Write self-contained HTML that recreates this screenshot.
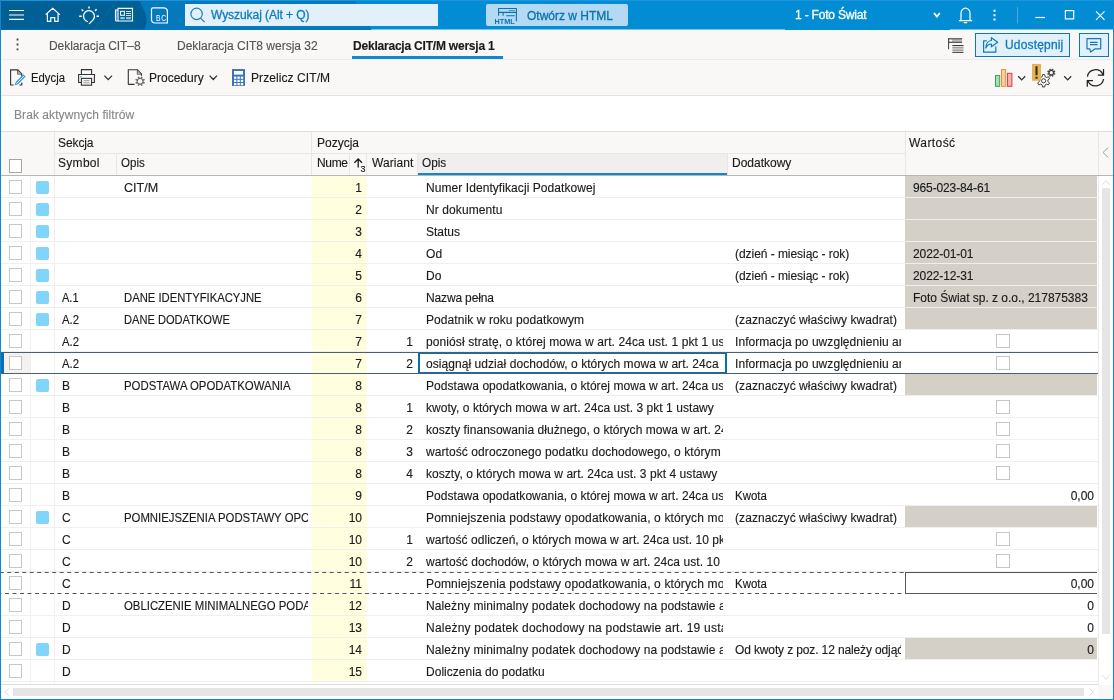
<!DOCTYPE html>
<html lang="pl"><head>
<meta charset="utf-8">
<title>Deklaracja CIT/M wersja 1</title>
<style>
*{box-sizing:border-box;margin:0;padding:0}
html,body{width:1114px;height:700px;overflow:hidden;background:#fff}
body{will-change:transform;-webkit-text-stroke:.14px;font-family:"Liberation Sans",sans-serif;font-size:12px;color:#1b1b1b;position:relative}
svg{position:absolute;overflow:visible}
/* window frame */
#frame{position:absolute;left:0;top:0;width:1114px;height:700px;border:1px solid #0f88d1;border-top:0;pointer-events:none;z-index:50}
/* title bar */
#tb{position:absolute;left:0;top:0;width:1114px;height:30px;background:#028cd4;border-bottom:1px solid #7cc3e9}
#tbdd{position:absolute;left:785px;top:28px;width:165px;height:2px;background:#028cd4}
#tbtop{position:absolute;left:0;top:0;width:1114px;height:1px;background:#1c93da}
#search{position:absolute;left:185px;top:4px;width:253px;height:22px;background:#e2f0fa;color:#0e7cc0;font-size:12px;line-height:22px;padding-left:26px}
#htmlbtn{position:absolute;left:486px;top:4px;width:142px;height:22px;background:#b4daf3;border-radius:2px;color:#0b72b2;font-size:12px;line-height:24px;padding-left:41px}
#comp{position:absolute;left:795px;top:0;height:30px;line-height:30px;color:#fff;font-size:12px}
/* tab row */
#tabs{position:absolute;left:1px;top:30px;width:1112px;height:30px;background:#f9f8f7;border-bottom:1px solid #ecebea}
.tab{position:absolute;top:0;height:30px;line-height:33px;font-size:12px;color:#555;white-space:nowrap}
.tab.act{color:#1b1b1b;font-weight:bold}
#tabul{position:absolute;left:351px;top:26px;width:151px;height:3px;background:#0f88d1}
#share{position:absolute;left:974px;top:3px;width:95px;height:24px;border:1px solid #0b78ba;background:#e2f0fa;color:#0e7cc0;font-size:12px;line-height:23px;padding-left:29px}
#chat{position:absolute;left:1078px;top:3px;width:30px;height:24px;border:1px solid #0b78ba;background:#e2f0fa}
/* toolbar */
#tools{position:absolute;left:1px;top:60px;width:1112px;height:36px;background:#f9f8f7;border-bottom:1px solid #e4e2e0}
.tl{position:absolute;top:0;height:35px;line-height:37px;font-size:12px;color:#1b1b1b;white-space:nowrap}
/* filter row */
#filter{position:absolute;left:1px;top:96px;width:1112px;height:36px;background:#fff;border-bottom:1px solid #e1dfdd;color:#8a8886;font-size:12px;line-height:38px;padding-left:13px}
/* grid header */
#gh{position:absolute;left:1px;top:132px;width:1112px;height:44px;background:#f9f8f7;border-bottom:1px solid #b8b6b4}
.hl{position:absolute;background:#e9e7e5}
.ht{position:absolute;z-index:2;font-size:12px;color:#1b1b1b;white-space:nowrap;line-height:14px}
/* rows */
.row{position:absolute;left:1px;width:1097px;height:22px;border-bottom:1px solid #f0efee;background:#fff;line-height:24px;white-space:nowrap}
.row .c{position:absolute;top:0;height:21px;overflow:hidden;font-size:12px}
.cb{position:absolute;left:8px;top:4px;width:13px;height:14px;border:1px solid #c8c6c4;background:#fff}
.ind{position:absolute;left:35px;top:5px;width:13px;height:13px;background:#81d4fa;border-radius:2px}
.sx{display:inline-block;transform-origin:0 50%;white-space:nowrap}
.sym{left:61px;width:55px}
.op{left:123px;width:184px}
.num{left:311px;width:55px;background:#ffffe0;text-align:right;padding-right:5px}
.var{left:367px;width:50px;text-align:right;padding-right:5px}
.op2{left:425px;width:297px}
.dod{left:734px;width:166px}
.val{left:904px;width:192px;padding-left:8px}
.val.g{background:#d4d0c8}
.val.r{text-align:right;padding-right:3px}
.vcb{position:absolute;left:91px;top:4px;width:14px;height:14px;border:1px solid #c8c6c4;background:#fff}

.row.sel:before{content:"";position:absolute;left:0;top:0;width:3px;height:22px;background:#0a6fb0}
.row.sel:after{content:"";position:absolute;left:3px;top:1px;width:26px;height:20px;background:#f3f2f1}
.row.sel .cb{z-index:1}
.row.sel .op2{left:417px;width:309px;height:20px;top:1px;border:1px solid #0a6fb0;border-width:1px 2px;padding-left:6px;line-height:20px}
.row.sel .op2:after{content:"";position:absolute;right:0;top:0;width:3px;height:18px;background:#fff}
.sl{position:absolute;left:1px;width:1097px;height:1px;background:#4a5f70;z-index:6}
.row.dash{border-bottom:0}
.val.bx{border:1px solid #555;border-right:0;height:22px;line-height:22px;z-index:5}
.dl{position:absolute;left:1px;width:904px;height:1px;z-index:4}
.vl{position:absolute;top:176px;width:1px;height:508px;background:#f0efee;z-index:3}

#gbot{position:absolute;left:1px;top:684px;width:1097px;height:1px;background:#e1dfdd}
#vsb{position:absolute;left:1098px;top:176px;width:15px;height:509px;background:#fff;border-left:1px solid #edebe9}
#vth{position:absolute;left:3px;top:12px;width:8px;height:446px;background:#e5e5e5}
#hsb{position:absolute;left:1px;top:685px;width:1112px;height:14px;background:#fff}
#hth{position:absolute;left:12px;top:3px;width:1071px;height:8px;background:#e5e5e5}
#search,#htmlbtn,#comp,#share{-webkit-text-stroke:.3px}
</style>
</head>
<body>
<div id="tb">
<svg style="left:0;top:0" width="1114" height="30" viewBox="0 0 1114 30" fill="none">
<path d="M0 1 H355.3 L371.5 30 H0 Z" fill="#0479bc"></path>
<path d="M0 1 H139.5 C143 8 146.6 14 146.6 20 C146.6 24 145.6 27 144.4 29.5 H0 Z" fill="#005f95"></path>
<path d="M94 30 L117 1" stroke="#5aa0c8" stroke-width="0.8" opacity=".2"></path>
</svg>
  <div id="tbtop"></div>
  <div id="tbdd"></div>
  <div id="search"><span style="letter-spacing: -0.06px;">Wyszukaj (Alt + Q)</span></div>
  <div id="htmlbtn"><span style="letter-spacing: 0px;">Otwórz w HTML</span></div>
  <div id="comp" style="letter-spacing: -0.19px;">1 - Foto Świat</div>
</div>
<div id="tabs">
  <div class="tab" style="left: 48px; letter-spacing: -0.07px;">Deklaracja CIT–8</div>
  <div class="tab" style="left: 176px; letter-spacing: 0px;">Deklaracja CIT8 wersja 32</div>
  <div class="tab act" style="left: 352px; letter-spacing: -0.21px;">Deklaracja CIT/M wersja 1</div>
  <div id="tabul"></div>
  <div id="share"><span style="letter-spacing: 0.17px;">Udostępnij</span></div>
  <div id="chat"></div>
</div>
<div id="tools">
  <div class="tl sx" style="left: 30px; transform: scaleX(0.943);">Edycja</div>
  <div class="tl" style="left: 148px; letter-spacing: 0px;">Procedury</div>
  <div class="tl" style="left: 250px; letter-spacing: 0.08px;">Przelicz CIT/M</div>
</div>
<div id="filter"><span style="letter-spacing: 0.07px;">Brak aktywnych filtrów</span></div>
<div id="gh">
  <div class="hl" style="left:53px;top:0;width:1px;height:43px"></div>
  <div class="hl" style="left:53px;top:21px;width:851px;height:1px"></div>
  <div class="hl" style="left:115px;top:22px;width:1px;height:21px"></div>
  <div class="hl" style="left:310px;top:0;width:1px;height:43px"></div>
  <div class="hl" style="left:365px;top:22px;width:1px;height:21px"></div>
  <div class="hl" style="left:416px;top:22px;width:1px;height:21px"></div>
  <div class="hl" style="left:726px;top:22px;width:1px;height:21px"></div>
  <div class="hl" style="left:904px;top:0;width:1px;height:43px"></div>
  <div class="hl" style="left:1097px;top:0;width:1px;height:43px"></div>
  <div class="ht" style="left: 57px; top: 4px; letter-spacing: -0.1px;">Sekcja</div>
  <div class="ht" style="left: 316px; top: 4px; letter-spacing: 0px;">Pozycja</div>
  <div class="ht" style="left: 908px; top: 4px; letter-spacing: 0.42px;">Wartość</div>
  <div class="ht" style="left: 57px; top: 24px; letter-spacing: 0.3px;">Symbol</div>
  <div class="ht sx" style="left: 120px; top: 24px; transform: scaleX(0.961);">Opis</div>
  <div class="ht" style="left: 316px; top: 24px; letter-spacing: -0.33px;">Nume</div>
  <div class="ht" style="left: 371px; top: 24px; letter-spacing: 0.08px;">Wariant</div>
  <div class="ht sx" style="left: 421px; top: 24px; transform: scaleX(0.982);">Opis</div>
  <div class="ht" style="left: 731px; top: 24px; letter-spacing: 0px;">Dodatkowy</div>
  <div class="hl" style="left:348px;top:22px;width:1px;height:21px"></div>
  <div style="position:absolute;left:417px;top:22px;width:309px;height:21px;background:#f0efee;border-bottom:2px solid #0f88d1"></div>
  <svg style="left:352px;top:26px" width="14" height="16" viewBox="0 0 14 16"><path d="M5.2 9.6 V1.2 M1.4 4.8 L5.2 1 L9 4.8" fill="none" stroke="#1b1b1b" stroke-width="1.3"></path></svg>
  <div class="ht" style="left:359.5px;top:33px;font-size:9px;line-height:9px">3</div>
  <svg style="left:1101px;top:15px" width="7" height="11" viewBox="0 0 7 11"><path d="M6.3 0.5 L1 5.5 L6.3 10.5" fill="none" stroke="#a0a0a0" stroke-width="1"></path></svg>
  <i class="cb" style="top:27px;border-color:#a6a6a6"></i>
</div>
<div class="row" style="top:176px"><i class="cb"></i><i class="ind"></i><span class="c op"><span class="sx" style="transform: scaleX(1.047);">CIT/M</span></span><span class="c num">1</span><span class="c op2" style="letter-spacing: 0.07px;">Numer Identyfikacji Podatkowej</span><span class="c val g" style="letter-spacing: -0.13px;">965-023-84-61</span></div>
<div class="row" style="top:198px"><i class="cb"></i><i class="ind"></i><span class="c num">2</span><span class="c op2" style="letter-spacing: 0.09px;">Nr dokumentu</span><span class="c val g"></span></div>
<div class="row" style="top:220px"><i class="cb"></i><i class="ind"></i><span class="c num">3</span><span class="c op2" style="letter-spacing: 0px;">Status</span><span class="c val g"></span></div>
<div class="row" style="top:242px"><i class="cb"></i><i class="ind"></i><span class="c num">4</span><span class="c op2" style="letter-spacing:0.08px">Od</span><span class="c dod" style="letter-spacing: -0.05px;">(dzień - miesiąc - rok)</span><span class="c val g" style="letter-spacing: -0.11px;">2022-01-01</span></div>
<div class="row" style="top:264px"><i class="cb"></i><i class="ind"></i><span class="c num">5</span><span class="c op2" style="letter-spacing:0.08px">Do</span><span class="c dod" style="letter-spacing: -0.05px;">(dzień - miesiąc - rok)</span><span class="c val g" style="letter-spacing: -0.11px;">2022-12-31</span></div>
<div class="row" style="top:286px"><i class="cb"></i><i class="ind"></i><span class="c sym"><span class="sx" style="transform: scaleX(0.917);">A.1</span></span><span class="c op"><span class="sx" style="transform: scaleX(0.938);">DANE IDENTYFIKACYJNE</span></span><span class="c num">6</span><span class="c op2" style="letter-spacing: -0.15px;">Nazwa pełna</span><span class="c val g" style="letter-spacing: -0.02px;">Foto Świat sp. z o.o., 217875383</span></div>
<div class="row" style="top:308px"><i class="cb"></i><i class="ind"></i><span class="c sym"><span class="sx" style="transform: scaleX(0.946);">A.2</span></span><span class="c op"><span class="sx" style="transform: scaleX(0.925);">DANE DODATKOWE</span></span><span class="c num">7</span><span class="c op2" style="letter-spacing: 0.08px;">Podatnik w roku podatkowym</span><span class="c dod" style="letter-spacing: 0.07px;">(zaznaczyć właściwy kwadrat)</span><span class="c val g"></span></div>
<div class="row" style="top:330px"><i class="cb"></i><span class="c sym"><span class="sx" style="transform: scaleX(0.946);">A.2</span></span><span class="c num">7</span><span class="c var">1</span><span class="c op2" style="letter-spacing: 0.1px;"><span>poniósł stratę, o której mowa w art. 24ca ust. 1 pkt 1</span> ustawy</span><span class="c dod" style="letter-spacing: 0.06px;"><span>Informacja po uwzględnieniu</span> art. 24ca</span><span class="c val"><i class="vcb"></i></span></div>
<div class="row sel" style="top:352px"><i class="cb"></i><span class="c sym"><span class="sx" style="transform: scaleX(0.946);">A.2</span></span><span class="c num">7</span><span class="c var">2</span><span class="c op2" style="letter-spacing: 0.06px;"><span>osiągnął udział dochodów, o których mowa w art. 24ca</span> ust. 1 pkt 2</span><span class="c dod" style="letter-spacing: 0.06px;"><span>Informacja po uwzględnieniu</span> art. 24ca</span><span class="c val"><i class="vcb"></i></span></div>
<div class="row" style="top:374px"><i class="cb"></i><i class="ind"></i><span class="c sym">B</span><span class="c op"><span class="sx" style="transform: scaleX(0.949);">PODSTAWA OPODATKOWANIA</span></span><span class="c num">8</span><span class="c op2" style="letter-spacing: 0.04px;"><span>Podstawa opodatkowania, o której mowa w art. 24ca</span> ust. 3</span><span class="c dod" style="letter-spacing: 0.07px;">(zaznaczyć właściwy kwadrat)</span><span class="c val g"></span></div>
<div class="row" style="top:396px"><i class="cb"></i><span class="c sym">B</span><span class="c num">8</span><span class="c var">1</span><span class="c op2" style="letter-spacing: 0.05px;">kwoty, o których mowa w art. 24ca ust. 3 pkt 1 ustawy</span><span class="c val"><i class="vcb"></i></span></div>
<div class="row" style="top:418px"><i class="cb"></i><span class="c sym">B</span><span class="c num">8</span><span class="c var">2</span><span class="c op2" style="letter-spacing: 0.04px;"><span>koszty finansowania dłużnego, o których mowa w art.</span> 24ca</span><span class="c val"><i class="vcb"></i></span></div>
<div class="row" style="top:440px"><i class="cb"></i><span class="c sym">B</span><span class="c num">8</span><span class="c var">3</span><span class="c op2" style="letter-spacing: 0.08px;"><span>wartość odroczonego podatku dochodowego, o którym</span> mowa</span><span class="c val"><i class="vcb"></i></span></div>
<div class="row" style="top:462px"><i class="cb"></i><span class="c sym">B</span><span class="c num">8</span><span class="c var">4</span><span class="c op2" style="letter-spacing: 0.05px;">koszty, o których mowa w art. 24ca ust. 3 pkt 4 ustawy</span><span class="c val"><i class="vcb"></i></span></div>
<div class="row" style="top:484px"><i class="cb"></i><span class="c sym">B</span><span class="c num">9</span><span class="c op2" style="letter-spacing: 0.04px;"><span>Podstawa opodatkowania, o której mowa w art. 24ca</span> ust. 3</span><span class="c dod"><span class="sx" style="transform: scaleX(0.955);">Kwota</span></span><span class="c val r">0,00</span></div>
<div class="row" style="top:506px"><i class="cb"></i><i class="ind"></i><span class="c sym">C</span><span class="c op"><span class="sx" style="transform: scaleX(0.946);"><span>POMNIEJSZENIA PODSTAWY</span> OPODATKOWANIA</span></span><span class="c num">10</span><span class="c op2" style="letter-spacing: 0.14px;"><span>Pomniejszenia podstawy opodatkowania, o których</span> mowa</span><span class="c dod" style="letter-spacing: 0.07px;">(zaznaczyć właściwy kwadrat)</span><span class="c val g"></span></div>
<div class="row" style="top:528px"><i class="cb"></i><span class="c sym">C</span><span class="c num">10</span><span class="c var">1</span><span class="c op2" style="letter-spacing: 0.04px;"><span>wartość odliczeń, o których mowa w art. 24ca ust. 10</span> pkt 1</span><span class="c val"><i class="vcb"></i></span></div>
<div class="row" style="top:550px"><i class="cb"></i><span class="c sym">C</span><span class="c num">10</span><span class="c var">2</span><span class="c op2" style="letter-spacing: 0.06px;"><span>wartość dochodów, o których mowa w art. 24ca ust. 10</span> pkt 2</span><span class="c val"><i class="vcb"></i></span></div>
<div class="row dash" style="top:572px"><i class="cb"></i><span class="c sym">C</span><span class="c num">11</span><span class="c op2" style="letter-spacing: 0.14px;"><span>Pomniejszenia podstawy opodatkowania, o których</span> mowa</span><span class="c dod"><span class="sx" style="transform: scaleX(0.955);">Kwota</span></span><span class="c val r bx">0,00</span></div>
<div class="row" style="top:594px"><i class="cb"></i><span class="c sym">D</span><span class="c op"><span class="sx" style="transform: scaleX(0.947);"><span>OBLICZENIE MINIMALNEGO</span> PODATKU</span></span><span class="c num">12</span><span class="c op2" style="letter-spacing: 0.1px;"><span>Należny minimalny podatek dochodowy na podstawie</span> art.</span><span class="c val r">0</span></div>
<div class="row" style="top:616px"><i class="cb"></i><span class="c sym">D</span><span class="c num">13</span><span class="c op2" style="letter-spacing: 0.21px;"><span>Należny podatek dochodowy na podstawie art. 19</span> ustawy</span><span class="c val r">0</span></div>
<div class="row" style="top:638px"><i class="cb"></i><i class="ind"></i><span class="c sym">D</span><span class="c num">14</span><span class="c op2" style="letter-spacing: 0.1px;"><span>Należny minimalny podatek dochodowy na podstawie</span> art.</span><span class="c dod" style="letter-spacing: -0.13px;"><span>Od kwoty z poz. 12 należy</span> odjąć</span><span class="c val g r">0</span></div>
<div class="row" style="top:660px"><i class="cb"></i><span class="c sym">D</span><span class="c num">15</span><span class="c op2" style="letter-spacing: 0.03px;">Doliczenia do podatku</span></div>
<div class="vl" style="left:30px"></div>
<div class="vl" style="left:54px"></div>

<svg class="dl" style="top:572px" width="904" height="1" viewBox="0 0 904 1"><line x1="-1.3" y1="0.5" x2="904" y2="0.5" stroke="#555" stroke-width="1" stroke-dasharray="4 3.5"></line></svg>
<svg class="dl" style="top:593px" width="904" height="1" viewBox="0 0 904 1"><line x1="-3.5" y1="0.5" x2="904" y2="0.5" stroke="#555" stroke-width="1" stroke-dasharray="4 3.5"></line></svg>
<div class="sl" style="top:352px"></div>
<div class="sl" style="top:373px"></div>
<div id="gbot"></div>
<div id="vsb"><div id="vth"></div>
<svg style="left:3px;top:3.5px" width="8" height="5" viewBox="0 0 8 5"><path d="M0.3 4.7 L4 0.7 L7.7 4.7" fill="none" stroke="#dcdcdc" stroke-width="1"></path></svg>
<svg style="left:3px;top:499px" width="8" height="5" viewBox="0 0 8 5"><path d="M0.3 0.3 L4 4.3 L7.7 0.3" fill="none" stroke="#dcdcdc" stroke-width="1"></path></svg>
</div>
<div id="hsb"><div id="hth"></div><div style="position:absolute;left:1097px;top:0;width:15px;height:14px;background:#f9f8f7"></div>
<svg style="left:3px;top:3px" width="5" height="8" viewBox="0 0 5 8"><path d="M4.7 0.3 L0.7 4 L4.7 7.7" fill="none" stroke="#dcdcdc" stroke-width="1"></path></svg>
<svg style="left:1088px;top:3px" width="5" height="8" viewBox="0 0 5 8"><path d="M0.3 0.3 L4.3 4 L0.3 7.7" fill="none" stroke="#dcdcdc" stroke-width="1"></path></svg>
</div>

<svg id="ico" style="left:0;top:0;z-index:20" width="1114" height="96" viewBox="0 0 1114 96" fill="none">
<g stroke="#fff" stroke-width="1.2">
<path d="M9 10.5 H24 M9 15 H24 M9 19.4 H24" stroke-width="1.1"></path>
<path d="M45.6 14.6 L52.7 8.2 L59.9 14.6 M47.4 13.2 V21.4 H50.8 V17.6 H54.7 V21.4 H58.1 V13.2" stroke-linejoin="miter"></path>
<path d="M87.4 21.5 A5.5 5.5 0 1 1 93.3 19.6 L89.4 23.6" stroke-linejoin="round" stroke-linecap="round" stroke-width="1.3"></path>
<path d="M89 6.6 V8.6 M81.6 9.5 L83.2 10.9 M96.6 9.3 L95 10.9 M79.2 16.3 H81.7 M96.5 16.3 H99" stroke-width="1.5"></path>
<path d="M118 8.4 H132.5 V21 H116.5 Q115.5 21 115.5 20 V10 H118 Z M118 8.4 V21" stroke-width="1.1"></path>
<path d="M116.7 10.5 V20.5" stroke-width=".6" opacity=".7"></path>
<rect x="120.6" y="11.3" width="3.8" height="4" stroke-width="1"></rect>
<path d="M126 11.5 H131 M126 13.5 H131 M126 15.5 H131" stroke-width=".8"></path>
<path d="M120.3 18.2 H124.8 M126 18.2 H131" stroke-width="2.2" opacity=".6"></path>
<path d="M153 7.8 H163.5 Q167.4 7.8 167.4 11.8 V23 H155.5 Q151.5 23 151.5 19.5 V9.3 Q151.5 7.8 153 7.8 Z" stroke-width="1.2"></path>
</g>
<text transform="translate(156.1 20.7) scale(.8 1)" font-family="Liberation Sans, sans-serif" font-size="8.4" fill="#fff" letter-spacing=".7" style="-webkit-text-stroke:0">BC</text>
<!-- search icon -->
<circle cx="196.6" cy="13.9" r="5.7" stroke="#1a80bd" stroke-width="1.2"></circle>
<path d="M200.6 18.1 L204.6 22.1" stroke="#1a80bd" stroke-width="1.3"></path>
<!-- html icon -->
<g stroke="#0b72b2" stroke-width="1.1">
<path d="M498.6 15.8 V8.5 H516.4 V21.3 M498.6 12.4 H516.4 M503.1 12.4 V15.8 M506.3 15.7 H514.8"></path>
<path d="M509.3 10.5 H514.6" stroke-dasharray="1.3 .8" stroke-width="1"></path>
</g>
<text x="494.6" y="23.7" font-family="Liberation Sans, sans-serif" font-size="7" font-weight="bold" fill="#0b72b2" textLength="20.2" lengthAdjust="spacingAndGlyphs">HTML</text>
<!-- company dropdown chevron, bell, dots, window buttons -->
<g stroke="#fff">
<path d="M934 13 L936.9 16.6 L939.8 13" stroke-width="1.8"></path>
<path d="M958.8 20.6 H972.2 M961 20.6 V13.2 A4.5 5 0 0 1 970 13.2 V20.6 M963.8 22.6 H967.2" stroke-width="1.2"></path>
<path d="M994.5 9.8 V11.8 M994.5 14.2 V16.2 M994.5 18.5 V20.5" stroke-width="2"></path>
<path d="M1017.5 7 V23.5" stroke="#46a9e0" stroke-width="1"></path>
<path d="M1035.3 17.5 H1045" stroke-width="1.2"></path>
<rect x="1065.4" y="10.6" width="8.3" height="8.3" stroke-width="1.2"></rect>
<path d="M1096 11.4 L1104.5 19.9 M1104.5 11.4 L1096 19.9" stroke-width="1.2"></path>
</g>
<!-- tab row: list icon, share, chat -->
<rect x="948.5" y="38.7" width="13.6" height="3.6" fill="#b9b9b9"></rect>
<rect x="949.3" y="39.4" width="2.6" height="2.3" fill="#fff"></rect>
<path d="M948.6 38.3 V49.2 M948.1 38.8 H962.1 M949 42.3 H962.1" stroke="#3a3a3a" stroke-width="1"></path>
<path d="M952.4 47.3 H963.5 M952.4 49 H963.5 M952.4 50.7 H963.5" stroke="#8a8a8a" stroke-width="1"></path>
<path d="M952.4 45.5 H963.5 M952.4 52.4 H963.5" stroke="#3a3a3a" stroke-width="1"></path>
<g stroke="#0e7abc" stroke-width="1.2" stroke-linejoin="round">
<path d="M986.8 40.8 H983.6 V52.2 H995.8 V46.6"></path>
<path d="M985.9 48 C986 43.6 988.5 40.7 991.4 40.5 V37.7 L997.7 42.2 L991.4 46.8 V44 C989 44 987.2 45.4 985.9 48 Z"></path>
<path d="M1087 38.6 H1100.7 V48.8 H1095.2 L1090.6 52.1 L1089.8 48.8 H1087 Z"></path>
<path d="M1090 42.4 H1097.6 M1090 44.6 H1097.6" stroke-width="1.1"></path>
</g>
<!-- toolbar icons -->
<g stroke="#333" stroke-width="1.1">
<path d="M13.6 85 H10.6 V69.9 H17.8 L21.8 73.9 V77 M17.8 69.9 V73.9 H21.8 M19.5 85 H21.8 V82.5"></path>
<path d="M128.3 84.4 V69.8 H137.4 L141.5 74 V76.5 M137.4 69.8 V74 H141.5 M128.3 84.4 H134.5"></path>
</g>
<path d="M16.6 83.4 L24.6 75.4" stroke="#3b9be0" stroke-width="3.2"></path>
<path d="M17 83 L24.4 75.6" stroke="#d6ebfb" stroke-width="1"></path>
<path d="M14.7 85.3 L15.3 82.6 L17.4 84.7 Z" fill="#3b9be0"></path>
<path d="M17.5 38.6 V40.4 M17.5 43.6 V45.4 M17.5 48.4 V50.2" stroke="#444" stroke-width="1.8"></path>
<path d="M17.8 70.4 V73.9 H21.3 Z M137.4 70.3 V74 H141 Z" fill="#a8a8a8"></path>
<!-- printer -->
<g stroke="#333" stroke-width="1.1">
<path d="M81.4 74.5 V69.6 H91.6 V74.5"></path>
<path d="M81.4 82.5 H78.6 V74.5 H94.4 V82.5 H91.6"></path>
<rect x="81.4" y="78.4" width="10.2" height="6.8" fill="#f9f8f7"></rect>
<path d="M83.5 80.7 H89.5 M83.5 82.8 H89.5" stroke="#999" stroke-width="1"></path>
</g>
<rect x="80" y="76" width="1.6" height="1.4" fill="#6bb8f0"></rect>
<path d="M104.4 75.6 L108.2 79.6 L112 75.6 M209.6 75.6 L213.3 79.5 L217 75.6" stroke="#333" stroke-width="1.3"></path>
<!-- gear for Procedury -->
<path d="M143.6 81.8 L144.9 82.6 L144.4 83.8 L142.9 83.4 L142.2 84.1 L142.6 85.6 L141.4 86.1 L140.6 84.8 L139.6 84.8 L138.8 86.1 L137.6 85.6 L138.0 84.1 L137.3 83.4 L135.8 83.8 L135.3 82.6 L136.6 81.8 L136.6 80.8 L135.3 80.0 L135.8 78.8 L137.3 79.2 L138.0 78.5 L137.6 77.0 L138.8 76.5 L139.6 77.8 L140.6 77.8 L141.4 76.5 L142.6 77.0 L142.2 78.5 L142.9 79.2 L144.4 78.8 L144.9 80.0 L143.6 80.8 Z" fill="#707070" stroke="#f9f8f7" stroke-width="1.6" paint-order="stroke" stroke-linejoin="round"></path>
<circle cx="140.1" cy="81.3" r="2.2" fill="#f9f8f7"></circle>
<!-- calculator -->
<rect x="232.5" y="69.6" width="12" height="15.8" fill="#3b73b9" stroke="#3b73b9" stroke-width="1"></rect>
<rect x="234" y="71" width="9" height="3.6" fill="#fff"></rect>
<g fill="#fff">
<rect x="234" y="76.6" width="2.4" height="2.2"></rect><rect x="237.4" y="76.6" width="2.4" height="2.2"></rect><rect x="240.8" y="76.6" width="2.4" height="2.2"></rect>
<rect x="234" y="79.8" width="2.4" height="2.2"></rect><rect x="237.4" y="79.8" width="2.4" height="2.2"></rect><rect x="240.8" y="79.8" width="2.4" height="2.2"></rect>
<rect x="234" y="83" width="2.4" height="2.2"></rect><rect x="237.4" y="83" width="2.4" height="2.2"></rect><rect x="240.8" y="83" width="2.4" height="2.2"></rect>
</g>
<!-- right toolbar: bars -->
<rect x="995.5" y="75.5" width="4.2" height="10.8" fill="#a9dcb4" stroke="#2fa84f" stroke-width="1"></rect>
<rect x="1001.5" y="69.6" width="4.2" height="16.7" fill="#f9cf9c" stroke="#f08a3c" stroke-width="1"></rect>
<rect x="1007.5" y="73.3" width="4.4" height="13" fill="#f4b0b0" stroke="#e23c3c" stroke-width="1"></rect>
<path d="M1018.2 76.3 L1021.7 79.9 L1025.2 76.3 M1064.2 76.3 L1067.7 79.9 L1071.2 76.3" stroke="#333" stroke-width="1.3"></path>
<path d="M1047.9 81.7 L1049.5 82.9 L1048.4 84.9 L1046.5 84.1 L1045.0 85.0 L1044.7 87.0 L1042.5 87.0 L1042.2 85.0 L1040.7 84.1 L1038.8 84.9 L1037.7 82.9 L1039.3 81.7 L1039.3 79.9 L1037.7 78.7 L1038.8 76.7 L1040.7 77.5 L1042.2 76.6 L1042.5 74.6 L1044.7 74.6 L1045.0 76.6 L1046.5 77.5 L1048.4 76.7 L1049.5 78.7 L1047.9 79.9 Z" fill="#f9f8f7" stroke="#444" stroke-width="1" stroke-linejoin="round"></path>
<circle cx="1043.6" cy="80.8" r="2.1" stroke="#444" stroke-width="1"></circle>
<path d="M1054.0 73.1 L1055.1 73.8 L1054.7 74.6 L1053.5 74.3 L1052.9 74.9 L1053.2 76.1 L1052.4 76.5 L1051.7 75.4 L1050.9 75.4 L1050.2 76.5 L1049.4 76.1 L1049.7 74.9 L1049.1 74.3 L1047.9 74.6 L1047.5 73.8 L1048.6 73.1 L1048.6 72.3 L1047.5 71.6 L1047.9 70.8 L1049.1 71.1 L1049.7 70.5 L1049.4 69.3 L1050.2 68.9 L1050.9 70.0 L1051.7 70.0 L1052.4 68.9 L1053.2 69.3 L1052.9 70.5 L1053.5 71.1 L1054.7 70.8 L1055.1 71.6 L1054.0 72.3 Z" fill="#444" stroke="#444" stroke-width=".6" stroke-linejoin="round"></path>
<circle cx="1051.3" cy="72.7" r="1.6" fill="#f9f8f7"></circle>
<rect x="1032" y="64" width="9" height="16.8" fill="#e4b456"></rect>
<path d="M1036.5 66.3 V75.3 M1036.5 76.7 V78.7" stroke="#3a2c14" stroke-width="2.1"></path>
<!-- refresh -->
<g stroke="#222" stroke-width="1.25">
<path d="M1087.4 76.6 A8.2 8.2 0 0 1 1102.9 74.4 M1103.5 69 V75 H1097.8"></path>
<path d="M1103.6 79 A8.2 8.2 0 0 1 1088.1 81.2 M1087.3 86.7 V80.7 H1093"></path>
</g>
</svg>
<div id="frame"></div>


</body></html>
